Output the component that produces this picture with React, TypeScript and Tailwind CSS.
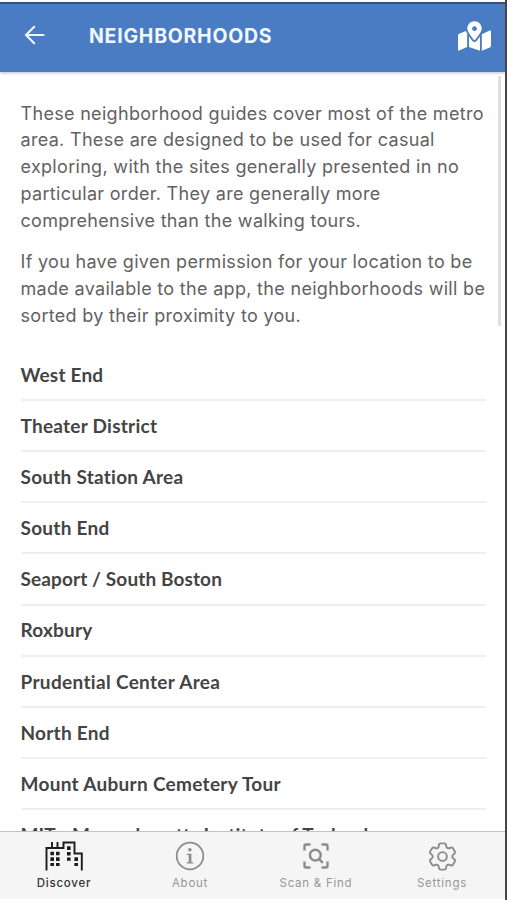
import { FaMapMarkedAlt } from "react-icons/fa";
import { HiOutlineCog6Tooth } from "react-icons/hi2";

const neighborhoods = [
  { name: "West End", spacing: "tracking-[0.2px]" },
  { name: "Theater District", spacing: "tracking-[0.25px]" },
  { name: "South Station Area", spacing: "tracking-[0.25px]" },
  { name: "South End", spacing: "tracking-[0.28px]" },
  { name: "Seaport / South Boston", spacing: "tracking-[0.12px]" },
  { name: "Roxbury", spacing: "tracking-[0.2px]" },
  { name: "Prudential Center Area", spacing: "tracking-[0.33px]" },
  { name: "North End", spacing: "tracking-[0.25px]" },
  { name: "Mount Auburn Cemetery Tour", spacing: "tracking-[0.3px]" },
  { name: "MIT - Massachusetts Institute of Technology", spacing: "tracking-[0.12px]" },
];

const BackIcon = () => (
  <svg width="22" height="20" viewBox="0 0 22 20" fill="none">
    <path
      d="M19.5 10H2M10.2 1.8L2 10L10.2 18.2"
      stroke="#f1f7ff"
      strokeWidth="2.1"
      strokeLinecap="round"
    />
  </svg>
);

const CityIcon = () => (
  <svg width="38" height="30" viewBox="0 0 38 30" fill="none">
    <path
      d="M1.5 29.5V7H18.5V1.5H29.5V12.5H36.8V29.5M7 1V7M12.5 1V7"
      stroke="#1c1c1c"
      strokeWidth="1.9"
    />
    <path
      d="M7.2 10.7v14.4M12.8 10.7v14.4M23.8 5.3v14.4M31.2 16.3v8.8"
      stroke="#1c1c1c"
      strokeWidth="3.6"
      strokeDasharray="3.6 2"
    />
  </svg>
);

const InfoIcon = () => (
  <svg width="30" height="30" viewBox="0 0 30 30" fill="none">
    <circle cx="15" cy="15" r="13.3" stroke="#8c8c8e" strokeWidth="1.8" />
    <circle cx="14.9" cy="8.7" r="1.8" fill="#8c8c8e" />
    <path d="M11.8 12.7H16.4V21.3H18.2V22.6H11.8V21.3H13.7V14H11.8Z" fill="#8c8c8e" />
  </svg>
);

const ScanIcon = () => (
  <svg width="26" height="26" viewBox="0 0 26 26" fill="none" stroke="#8c8c8e" strokeWidth="2.4">
    <path d="M1.5 7.5V3Q1.5 1.5 3 1.5H7.5M18.5 1.5H23Q24.5 1.5 24.5 3V7.5M24.5 18.5V23Q24.5 24.5 23 24.5H18.5M7.5 24.5H3Q1.5 24.5 1.5 23V18.5" />
    <circle cx="12.3" cy="12.1" r="5.4" />
    <path d="M16 16L19.8 19.8" />
  </svg>
);

const tabs = [
  { label: "Discover", icon: <CityIcon />, active: true },
  { label: "About", icon: <InfoIcon />, active: false },
  { label: "Scan & Find", icon: <ScanIcon />, active: false },
  {
    label: "Settings",
    icon: <HiOutlineCog6Tooth className="h-[35px] w-[35px] shrink-0 stroke-[1.3]" />,
    active: false,
  },
];

const Header = () => (
  <header className="flex h-[70px] shrink-0 items-center border-t-2 border-[#3d5274] bg-[#4a7cc3] pl-[24px] pr-[14px] shadow-[0_1px_3px_rgba(0,0,0,0.25)]">
    <button type="button" aria-label="Back" className="-mt-[7px]">
      <BackIcon />
    </button>
    <h1 className="-mt-[2px] ml-[43px] flex-1 font-['Inter',sans-serif] text-[19.5px] font-bold tracking-[0.75px] text-[#f1f7ff]">
      NEIGHBORHOODS
    </h1>
    <FaMapMarkedAlt className="-mt-1 h-[30px] w-[33px] text-white" />
  </header>
);

const TabBar = () => (
  <nav className="flex h-[68px] shrink-0 border-t border-[#c2c2c2] bg-[#f5f5f5] pl-px">
    {tabs.map((tab) => (
      <button
        key={tab.label}
        type="button"
        className={
          tab.active
            ? "flex flex-1 flex-col items-center pt-2 font-medium text-[#333333]"
            : "flex flex-1 flex-col items-center pt-2 text-[#979797]"
        }
      >
        <span
          className={
            tab.active
              ? "flex h-8 items-center"
              : "flex h-8 items-center text-[#8c8c8e]"
          }
        >
          {tab.icon}
        </span>
        <span className="mt-[3px] font-['Inter',sans-serif] text-[11.5px] leading-4 tracking-[0.75px]">
          {tab.label}
        </span>
      </button>
    ))}
  </nav>
);

export default function App() {
  return (
    <div className="flex h-[900px] w-[507px] flex-col overflow-hidden border-r-2 border-[#454545] bg-white pb-px pt-[2px]">
      <Header />
      <main className="relative min-h-0 flex-1 overflow-hidden pl-[20.5px] pr-[19px] pt-[28.5px]">
        <div className="flex flex-col gap-[14.5px] whitespace-nowrap font-['Inter',sans-serif] text-[18px] leading-[26.8px] tracking-[0.31px] text-[#626262]">
          <p>
            These neighborhood guides cover most of the metro
            <br />
            area. These are designed to be used for casual
            <br />
            exploring, with the sites generally presented in no
            <br />
            particular order. They are generally more
            <br />
            comprehensive than the walking tours.
          </p>
          <p>
            If you have given permission for your location to be
            <br />
            made available to the app, the neighborhoods will be
            <br />
            sorted by their proximity to you.
          </p>
        </div>
        <ul className="mt-[20.5px]">
          {neighborhoods.map(({ name, spacing }) => (
            <li
              key={name}
              className={`flex h-[51.15px] items-center whitespace-nowrap border-b-2 border-[#efefef] pt-px font-['Lato',sans-serif] text-[19px] font-bold text-[#444444] ${spacing}`}
            >
              {name}
            </li>
          ))}
        </ul>
        <div className="absolute right-[4px] top-1 h-[250px] w-[3.5px] bg-[#dfdfdf]" />
      </main>
      <TabBar />
    </div>
  );
}
